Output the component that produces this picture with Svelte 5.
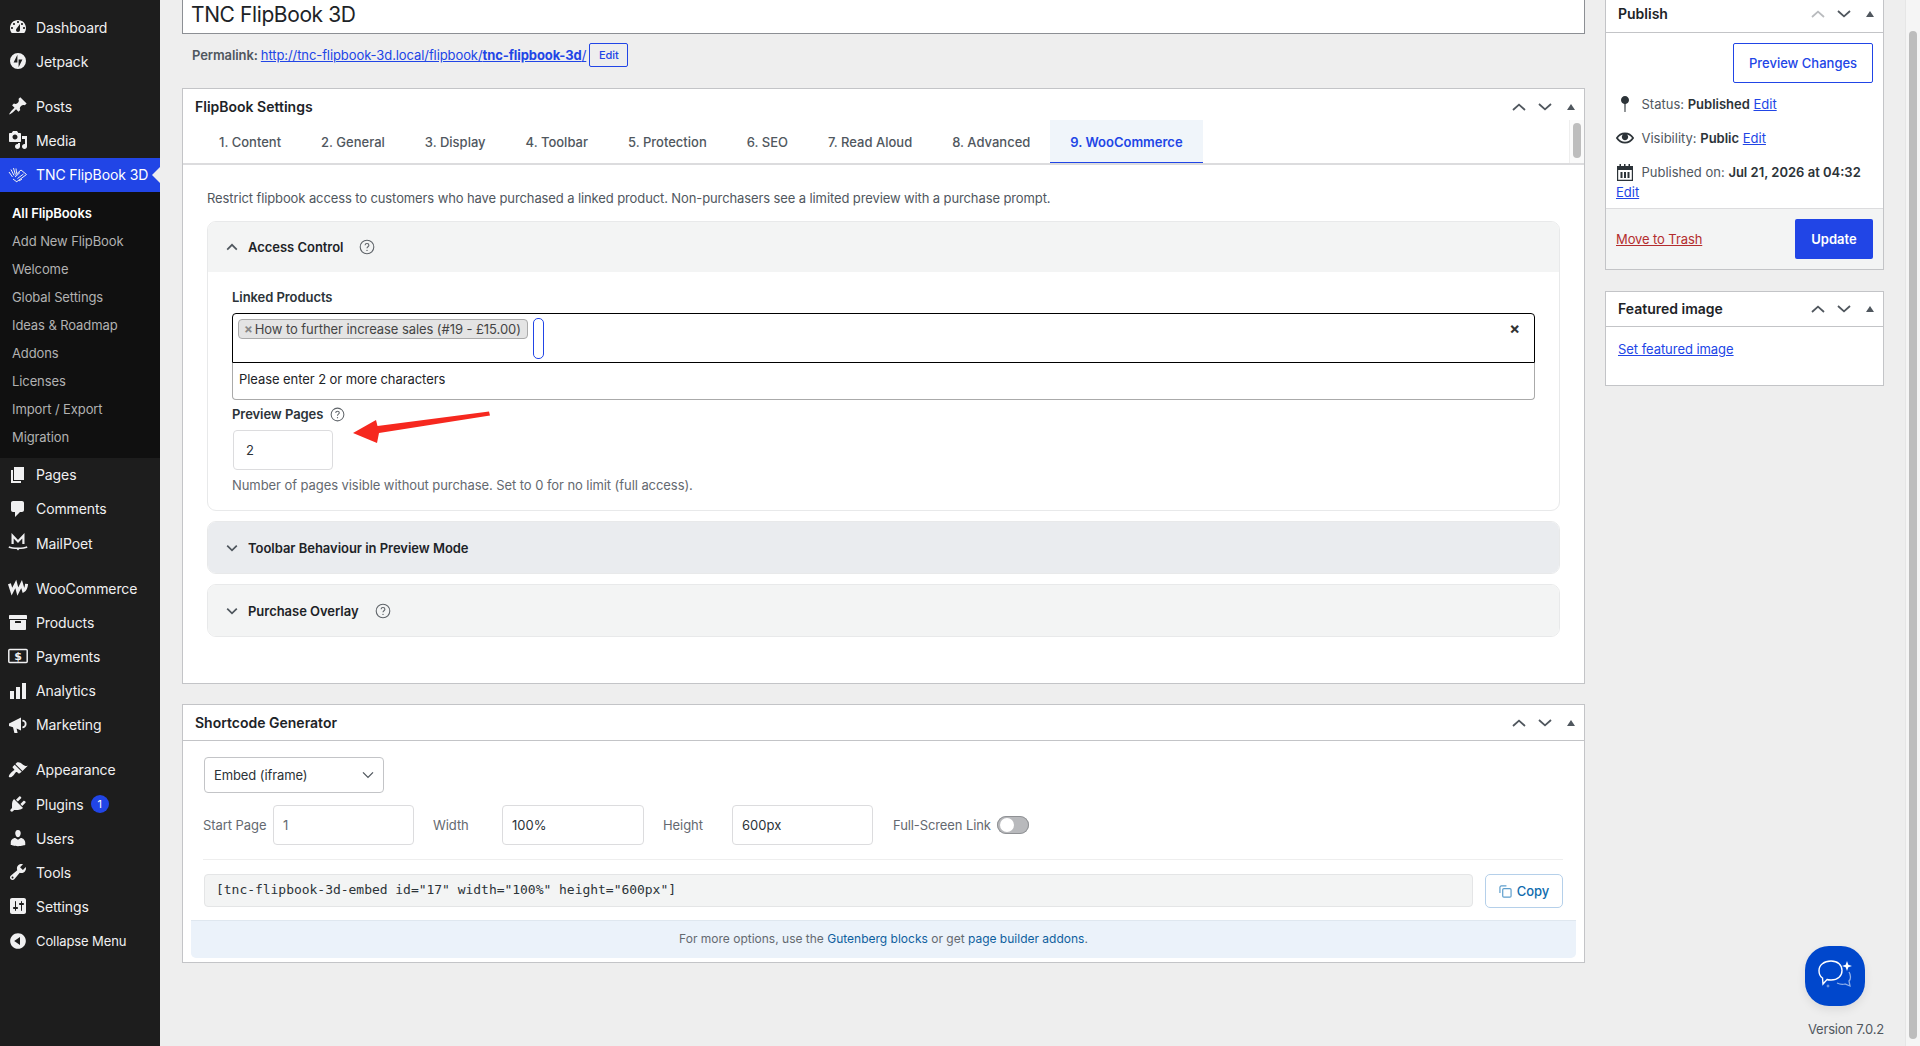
<script>
	const icons = {
		dashboard:
			'M3.76 16h12.48c1.1-1.37 1.76-3.11 1.76-5 0-4.42-3.58-8-8-8s-8 3.58-8 8c0 1.89.66 3.63 1.76 5zM10 4c.55 0 1 .45 1 1s-.45 1-1 1-1-.45-1-1 .45-1 1-1zM6 6c.55 0 1 .45 1 1s-.45 1-1 1-1-.45-1-1 .45-1 1-1zm8 0c.55 0 1 .45 1 1s-.45 1-1 1-1-.45-1-1 .45-1 1-1zm-5.37 5.55L12 7v6c0 1.1-.9 2-2 2s-2-.9-2-2c0-.57.24-1.08.63-1.45zM4 10c.55 0 1 .45 1 1s-.45 1-1 1-1-.45-1-1 .45-1 1-1zm12 0c.55 0 1 .45 1 1s-.45 1-1 1-1-.45-1-1 .45-1 1-1z',
		jetpack: 'M10 2a8 8 0 1 0 0 16a8 8 0 0 0 0-16zM9.4 11.4H5.6l3.8-7.6zM10.6 8.6h3.8l-3.8 7.6z',
		pin: 'M10.44 3.02l1.82-1.82 6.36 6.35-1.83 1.82c-1.05-.68-2.48-.57-3.41.36l-.75.75c-.92.93-1.04 2.35-.35 3.41l-1.83 1.82-2.41-2.41-2.8 2.79c-.42.42-3.38 2.71-3.8 2.29s1.86-3.39 2.28-3.81l2.79-2.79L4.1 9.36l1.83-1.82c1.05.69 2.48.57 3.4-.36l.75-.75c.93-.92 1.05-2.35.36-3.41z',
		media:
			'M13 11V4c0-.55-.45-1-1-1h-1.67L9 1H5L3.67 3H2c-.55 0-1 .45-1 1v7c0 .55.45 1 1 1h10c.55 0 1-.45 1-1zM7 4.5c1.38 0 2.5 1.12 2.5 2.5S8.38 9.5 7 9.5 4.5 8.38 4.5 7 5.62 4.5 7 4.5zM14 6h5v10.5c0 1.38-1.12 2.5-2.5 2.5S14 17.88 14 16.5s1.12-2.5 2.5-2.5c.17 0 .34.02.5.05V9h-3V6zm-4 8.05V13h2v3.5c0 1.38-1.12 2.5-2.5 2.5S7 17.88 7 16.5 8.12 14 9.5 14c.17 0 .34.02.5.05z',
		page: 'M6 15V2h10v13H6zm-1 1h8v2H3V5h2v11z',
		comment: 'M5 2h9c1.1 0 2 .9 2 2v7c0 1.1-.9 2-2 2h-2l-5 5v-5H5c-1.1 0-2-.9-2-2V4c0-1.1.9-2 2-2z',
		products:
			'M19 4v3H1V4c0-.55.45-1 1-1h16c.55 0 1 .45 1 1zM2 8h16v9c0 .55-.45 1-1 1H3c-.55 0-1-.45-1-1V8zm11 3V9.5c0-.28-.22-.5-.5-.5h-5c-.28 0-.5.22-.5.5V11h6z',
		analytics: 'M2 10h4v8H2zM8 6h4v12H8zM14 2h4v16h-4z',
		marketing:
			'M1 8.500L13 2.500v13L8.600 13.400l1 4.600H6.400L5 12.200 1 11zM14.400 4.800a4.200 4.200 0 0 1 0 8.400v-1.800a2.400 2.400 0 0 0 0-4.800z',
		appearance:
			'M14.48 11.06L7.41 3.99l1.5-1.5c.5-.56 2.3-.47 3.51.32 1.21.8 1.43 1.28 2.91 2.1 1.18.64 2.45 1.26 4.45.85zm-.71.71L6.7 4.7 4.93 6.47c-.39.39-.39 1.02 0 1.41l1.06 1.06c.39.39.39 1.03 0 1.42-.6.6-1.43 1.11-2.21 1.69-.35.26-.7.53-1.01.84-1.44 1.44-2.4 3.5-1.69 4.21.71.7 2.77-.25 4.21-1.69.31-.31.58-.66.84-1.01.58-.78 1.09-1.61 1.69-2.21.39-.39 1.03-.39 1.42 0l1.06 1.06c.39.39 1.02.39 1.41 0z',
		plugins:
			'M13.11 4.36L9.87 7.6 8 5.73l3.24-3.24c.35-.34 1.05-.2 1.56.32.52.51.66 1.21.31 1.55zm-8 1.77l.91-1.12 9.01 9.01-1.19.84c-.71.71-2.63 1.16-3.82 1.16H6.14L4.9 17.26c-.59.59-1.54.59-2.12 0-.59-.58-.59-1.53 0-2.12l1.24-1.24v-3.88c0-1.13.4-3.19 1.09-3.89zm7.26 3.97l3.24-3.24c.34-.35 1.04-.21 1.55.31.52.51.66 1.21.31 1.55l-3.24 3.25z',
		users:
			'M10 9.25c-2.27 0-2.73-3.44-2.73-3.44C7 4.02 7.82 2 9.97 2c2.16 0 2.98 2.02 2.71 3.81 0 0-.41 3.44-2.68 3.44zm0 2.57L12.72 10c2.39 0 4.52 2.33 4.52 4.53v2.49s-3.65 1.13-7.24 1.13c-3.65 0-7.24-1.13-7.24-1.13v-2.49c0-2.25 1.94-4.48 4.47-4.48z',
		tools:
			'M16.68 9.77c-1.34 1.34-3.3 1.67-4.95.99l-5.41 6.52c-.99.99-2.59.99-3.58 0s-.99-2.59 0-3.57l6.52-5.42c-.68-1.65-.35-3.61.99-4.95 1.28-1.28 3.12-1.62 4.72-1.06l-2.89 2.89 2.82 2.82 2.86-2.87c.53 1.58.18 3.39-1.08 4.65zM3.81 16.21c.4.39 1.04.39 1.43 0 .4-.4.4-1.04 0-1.43-.39-.4-1.03-.4-1.43 0-.39.39-.39 1.03 0 1.43z',
		settings:
			'M18 16V4c0-1.1-.9-2-2-2H4c-1.1 0-2 .9-2 2v12c0 1.1.9 2 2 2h12c1.1 0 2-.9 2-2zM8 11h1c.55 0 1 .45 1 1s-.45 1-1 1H8v1.5c0 .28-.22.5-.5.5s-.5-.22-.5-.5V13H6c-.55 0-1-.45-1-1s.45-1 1-1h1V5.5c0-.28.22-.5.5-.5s.5.22.5.5V11zm5-2h-1c-.55 0-1-.45-1-1s.45-1 1-1h1V5.5c0-.28.22-.5.5-.5s.5.22.5.5V7h1c.55 0 1 .45 1 1s-.45 1-1 1h-1v5.5c0 .28-.22.5-.5.5s-.5-.22-.5-.5V9z',
		collapse: 'M10 2.16c4.33 0 7.84 3.51 7.84 7.84s-3.51 7.84-7.84 7.84S2.16 14.33 2.16 10 5.71 2.16 10 2.16zm2 11.72V6.12L6.18 9.97z'
	};

	// first block of the admin menu, down to the plugin's own entry
	const topMenu = [
		[
			{ label: 'Dashboard', icon: 'dashboard' },
			{ label: 'Jetpack', icon: 'jetpack' }
		],
		[
			{ label: 'Posts', icon: 'pin' },
			{ label: 'Media', icon: 'media' }
		]
	];

	const subMenu = [
		'All FlipBooks',
		'Add New FlipBook',
		'Welcome',
		'Global Settings',
		'Ideas & Roadmap',
		'Addons',
		'Licenses',
		'Import / Export',
		'Migration'
	];

	const restMenu = [
		[
			{ label: 'Pages', icon: 'page' },
			{ label: 'Comments', icon: 'comment' },
			{ label: 'MailPoet', icon: 'mailpoet' }
		],
		[
			{ label: 'WooCommerce', icon: 'woo' },
			{ label: 'Products', icon: 'products' },
			{ label: 'Payments', icon: 'payments' },
			{ label: 'Analytics', icon: 'analytics' },
			{ label: 'Marketing', icon: 'marketing' }
		],
		[
			{ label: 'Appearance', icon: 'appearance' },
			{ label: 'Plugins', icon: 'plugins', badge: '1' },
			{ label: 'Users', icon: 'users' },
			{ label: 'Tools', icon: 'tools' },
			{ label: 'Settings', icon: 'settings' }
		]
	];

	const tabs = [
		'1. Content',
		'2. General',
		'3. Display',
		'4. Toolbar',
		'5. Protection',
		'6. SEO',
		'7. Read Aloud',
		'8. Advanced',
		'9. WooCommerce'
	];
</script>

{#snippet menuIcon(name)}
	<svg class="menu-icon" viewBox="0 0 20 20" aria-hidden="true">
		{#if name === 'mailpoet'}
			<path class="line" d="M4.600 11V2.800L10 8.400l5.400-5.600V11" stroke-width="2.200" />
			<path class="line" d="M.8 14c2.800 1.300 5.800 1.300 9.200 1.300s6.400 0 9.200-1.300" stroke-width="1.400" />
			<path d="M8.200 15.400h3.600L10 17.400z" />
		{:else if name === 'woo'}
			<path class="line" d="M1.400 5.800l2.500 7.800 3.900-7.600 2 7.600 3.800-7.600 2 6.800c1.500-.8 2.700-3.800 3-7" stroke-width="3" />
		{:else if name === 'payments'}
			<rect class="line" x="0.8" y="3.500" width="18.400" height="13" rx="1" stroke-width="1.500" />
			<text class="dollar" x="10" y="14.200" text-anchor="middle">$</text>
		{:else}
			<path fill-rule="evenodd" d={icons[name]} />
		{/if}
	</svg>
{/snippet}

{#snippet menuGroup(group, last)}
	<ul class="menu-group" class:menu-group--last={last}>
		{#each group as item}
			<li class="menu-item">
				{@render menuIcon(item.icon)}
				<span>{item.label}</span>
				{#if item.badge}
					<span class="badge">{item.badge}</span>
				{/if}
			</li>
		{/each}
	</ul>
{/snippet}

{#snippet handles(upDisabled)}
	<div class="handles">
		<svg class="chev" class:chev--off={upDisabled} viewBox="0 0 14 8"><path d="M1 7l6-5.400L13 7" /></svg>
		<svg class="chev" viewBox="0 0 14 8"><path d="M1 1l6 5.400L13 1" /></svg>
		<span class="tri"></span>
	</div>
{/snippet}

{#snippet help()}
	<svg class="help" viewBox="0 0 16 16" aria-hidden="true">
		<circle cx="8" cy="8" r="6.800" />
		<path d="M6.100 6.300c0-1.100.9-1.800 1.900-1.800s1.900.7 1.900 1.700c0 1.500-1.900 1.500-1.900 3" />
		<circle class="dot" cx="8" cy="11.400" r="0.700" />
	</svg>
{/snippet}

{#snippet caret(up)}
	<svg class="caret" viewBox="0 0 12 8" aria-hidden="true">
		<path d={up ? 'M1.200 6.600L6 1.800l4.800 4.800' : 'M1.200 1.600L6 6.400l4.800-4.800'} />
	</svg>
{/snippet}

<div class="shell">
	<nav class="sidebar">
		{#each topMenu as group, i}
			{@render menuGroup(group, i === topMenu.length - 1)}
		{/each}

		<div class="menu-item menu-item--current">
			<svg class="menu-icon" viewBox="0 0 20 20" aria-hidden="true">
				<g class="line" stroke-width="1">
					<path d="M1 7l3.500 5M3 4.500l3 6M5.500 3l1.800 6.500M8 3.500l.6 5" />
					<path d="M9 16.500l9.500-7L13 5 7.500 10" />
					<path d="M9.500 13.500l6-4.500M7 12l5-4.500M5 14l4 3M11 16l3-2" />
				</g>
			</svg>
			<span>TNC FlipBook 3D</span>
			<span class="current-arrow"></span>
		</div>
		<ul class="submenu">
			{#each subMenu as entry, i}
				<li class:submenu--current={i === 0}>{entry}</li>
			{/each}
		</ul>

		{#each restMenu as group, i}
			{@render menuGroup(group, i === restMenu.length - 1)}
		{/each}

		<div class="menu-item menu-item--collapse">
			{@render menuIcon('collapse')}
			<span>Collapse Menu</span>
		</div>
	</nav>

	<main class="content">
		<div class="col-main">
			<div class="title-box">TNC FlipBook 3D</div>
			<div class="permalink">
				<span class="permalink-label">Permalink:</span>
				<a href="#top">http://tnc-flipbook-3d.local/flipbook/<strong>tnc-flipbook-3d</strong>/</a>
				<span class="btn-edit">Edit</span>
			</div>

			<section class="postbox postbox--settings">
				<header class="settings-head">
					<h2>FlipBook Settings</h2>
					{@render handles(false)}
				</header>
				<div class="tabs">
					{#each tabs as tab, i}
						<span class="tab" class:tab--active={i === tabs.length - 1}>{tab}</span>
					{/each}
					<div class="tabs-scroll"><span></span></div>
				</div>

				<div class="tab-panel">
					<p class="intro">
						Restrict flipbook access to customers who have purchased a linked product. Non-purchasers see a limited preview with a purchase prompt.
					</p>

					<div class="acc">
						<div class="acc-head">
							{@render caret(true)}
							<span>Access Control</span>
							{@render help()}
						</div>
						<div class="acc-body">
							<div class="field-label">Linked Products</div>
							<div class="select2">
								<span class="chip"><span class="chip-x">×</span>How to further increase sales (#19 - £15.00)</span>
								<span class="search"></span>
								<span class="clear">×</span>
							</div>
							<div class="select2-drop">Please enter 2 or more characters</div>
							<div class="field-label field-label--help">Preview Pages {@render help()}</div>
							<div class="input input--preview">2</div>
							<p class="hint">Number of pages visible without purchase. Set to 0 for no limit (full access).</p>
						</div>
					</div>

					<div class="acc acc--closed acc--hover">
						<div class="acc-head">
							{@render caret(false)}
							<span>Toolbar Behaviour in Preview Mode</span>
						</div>
					</div>

					<div class="acc acc--closed acc--last">
						<div class="acc-head">
							{@render caret(false)}
							<span>Purchase Overlay</span>
							{@render help()}
						</div>
					</div>
				</div>
			</section>

			<section class="postbox postbox--shortcode">
				<header class="box-head">
					<h2>Shortcode Generator</h2>
					{@render handles(false)}
				</header>
				<div class="sc-body">
					<div class="sc-select">
						Embed (iframe)
						<svg viewBox="0 0 12 8" aria-hidden="true"><path d="M1 1.400l5 5 5-5" /></svg>
					</div>
					<div class="sc-row">
						<span class="sc-label">Start Page</span>
						<div class="input sc-input sc-input--muted">1</div>
						<span class="sc-label sc-label--w">Width</span>
						<div class="input sc-input sc-input--wide">100%</div>
						<span class="sc-label sc-label--h">Height</span>
						<div class="input sc-input">600px</div>
						<span class="sc-label sc-label--fs">Full-Screen Link</span>
						<span class="toggle"><span></span></span>
					</div>
					<div class="sc-code-row">
						<code>[tnc-flipbook-3d-embed id="17" width="100%" height="600px"]</code>
						<span class="btn-copy">
							<svg viewBox="0 0 14 14" aria-hidden="true">
								<path class="copy-back" d="M1 8.500V2.500A1.500 1.500 0 0 1 2.500 1H8" />
								<rect x="4" y="4" width="9" height="9" rx="1.200" />
							</svg>
							Copy
						</span>
					</div>
				</div>
				<div class="notice">
					For more options, use the <a href="#top">Gutenberg blocks</a> or get <a href="#top">page builder addons</a>.
				</div>
			</section>
		</div>

		<aside class="col-side">
			<section class="postbox postbox--publish">
				<header class="box-head box-head--short">
					<h2>Publish</h2>
					{@render handles(true)}
				</header>
				<div class="publish-body">
					<div class="preview-row"><span class="btn-preview">Preview Changes</span></div>
					<div class="meta">
						<svg viewBox="0 0 20 20" aria-hidden="true"><path d="M14 6c0-2.200-1.800-4-4-4S6 3.800 6 6c0 2.100 1.600 3.800 3.400 4l.1 8h1l.1-8c1.800-.2 3.400-1.900 3.400-4z" /></svg>
						<span>Status: <b>Published</b> <a href="#top">Edit</a></span>
					</div>
					<div class="meta">
						<svg viewBox="-1 -1 22 22" aria-hidden="true"><path d="M19.700 9.400C17.700 6 14 3.900 10 3.900S2.300 6 .3 9.400L0 10l.3.6c2 3.400 5.700 5.500 9.700 5.500s7.700-2.100 9.700-5.500l.3-.6-.3-.6zM10 14.100c-3.100 0-6-1.600-7.700-4.100C3.600 8 5.700 6.600 8 6.100c-.9.6-1.500 1.700-1.500 2.900 0 1.900 1.600 3.500 3.500 3.500s3.500-1.600 3.500-3.500c0-1.200-.6-2.300-1.500-2.900 2.300.5 4.400 1.900 5.700 3.900-1.700 2.500-4.600 4.100-7.700 4.100z" /></svg>
						<span>Visibility: <b>Public</b> <a href="#top">Edit</a></span>
					</div>
					<div class="meta meta--date">
						<svg viewBox="0 0 20 20" aria-hidden="true">
							<path fill-rule="evenodd" d="M2 4h2.500V2h1.500v2h3V2h1.500v2h3V2h1.500v2H18v15H2zM3.200 8v9.800h13.600V8z" />
							<path d="M5.500 10h2v6h-2zM9 10h2v6H9zM12.500 10h2v6h-2z" />
						</svg>
						<span>Published on: <b>Jul 21, 2026 at 04:32</b></span>
					</div>
					<a class="date-edit" href="#top">Edit</a>
				</div>
				<footer class="publish-foot">
					<a href="#top">Move to Trash</a>
					<span class="btn-update">Update</span>
				</footer>
			</section>

			<section class="postbox postbox--featured">
				<header class="box-head box-head--featured">
					<h2>Featured image</h2>
					{@render handles(false)}
				</header>
				<div class="featured-body"><a href="#top">Set featured image</a></div>
			</section>
		</aside>
	</main>

	<!-- annotation drawn over the screenshot -->
	<svg class="arrow" viewBox="0 0 140 34" aria-hidden="true">
		<path d="M1 22L24 9l1.500 6L137 .5l1 4L27 22l-2 10z" />
	</svg>

	<div class="chat">
		<svg viewBox="0 0 60 60" aria-hidden="true">
			<path class="chat-back" d="M44 26c2 3 2 7 0 9l1 5-5-2c-3 1-6 0-8-1" />
			<path class="chat-main" d="M26 15c7 0 11 4 11 9.500S33 34 26 34c-1.500 0-3 0-4-.5L18 38l-.500-6C15 30.500 14 27.500 14 24.500 14 19 19 15 26 15z" />
			<path class="chat-spark" d="M42 15l1.300 3.700L47 20l-3.700 1.300L42 25l-1.300-3.700L37 20l3.700-1.300z" />
			<path class="chat-spark chat-spark--dim" d="M23 38l.600 1.400L25 40l-1.400.600L23 42l-.600-1.400L21 40l1.400-.600z" />
		</svg>
	</div>
	<div class="version">Version 7.0.2</div>

	<div class="page-scroll"><span></span></div>
</div>

<style>
	:global(body) {
		margin: 0;
		background: #eeeeee;
		font-family: Inter, 'Liberation Sans', sans-serif;
		font-size: 13px;
		color: #3c434a;
	}

	a {
		color: #2145e6;
		text-decoration: underline;
	}

	h2 {
		margin: 0;
		font-size: 14px;
		line-height: 20px;
		font-weight: 600;
		color: #1d2327;
	}

	p {
		margin: 0;
	}

	ul {
		list-style: none;
		margin: 0;
		padding: 0;
	}

	.shell {
		position: relative;
		display: grid;
		grid-template-columns: 160px 1fr;
		height: 1046px;
		overflow: hidden;
		background: #eeeeee;
	}

	/* admin menu */
	.sidebar {
		background: #1d1d1d;
		padding-top: 10px;
		color: #f0f0f1;
	}

	.menu-group {
		margin-bottom: 11px;
	}

	.menu-group--last {
		margin-bottom: 0;
	}

	.menu-item {
		display: flex;
		align-items: center;
		height: 34.15px;
		font-size: 14px;
		letter-spacing: -0.1px;
	}

	.menu-icon {
		flex: none;
		width: 20px;
		height: 20px;
		margin: 0 8px 0 8px;
		fill: #f0f0f1;
	}

	.menu-icon .line {
		fill: none;
		stroke: #f0f0f1;
	}

	.dollar {
		font-family: 'DejaVu Sans', sans-serif;
		font-size: 11px;
		font-weight: 700;
		fill: #f0f0f1;
	}

	.menu-item--current {
		position: relative;
		background: #2145e6;
		color: #fff;
	}

	.current-arrow {
		position: absolute;
		right: 0;
		top: 9px;
		border: 8px solid transparent;
		border-right-color: #eeeeee;
		border-left-width: 0;
	}

	.submenu {
		background: #101010;
		padding: 7px 0;
	}

	.submenu li {
		height: 28px;
		line-height: 28px;
		padding-left: 12px;
		font-size: 13px;
		letter-spacing: -0.1px;
		color: #b2b2b2;
	}

	.submenu .submenu--current {
		color: #fff;
		font-weight: 600;
	}

	.badge {
		width: 18px;
		height: 18px;
		margin-left: 7px;
		border-radius: 50%;
		background: #2145e6;
		color: #fff;
		font-size: 11px;
		line-height: 18px;
		text-align: center;
	}

	.menu-item--collapse {
		font-size: 13px;
	}

	/* page columns */
	.content {
		display: flex;
		align-items: flex-start;
		gap: 20px;
		padding-left: 22px;
		min-width: 0;
	}

	.col-main {
		flex: none;
		width: 1403px;
	}

	.col-side {
		flex: none;
		width: 279px;
	}

	.postbox {
		background: #fff;
		border: 1px solid #c3c4c7;
	}

	.title-box {
		box-sizing: border-box;
		height: 34px;
		padding-left: 8px;
		background: #fff;
		border: 1px solid #8c8f94;
		border-top: 0;
		font-size: 21px;
		line-height: 30px;
		color: #1d2327;
		letter-spacing: -0.4px;
	}

	.permalink {
		display: flex;
		align-items: center;
		gap: 3px;
		height: 24px;
		margin: 9px 0 21px;
		padding-left: 10px;
		font-size: 13px;
		letter-spacing: -0.09px;
	}

	.permalink-label {
		font-weight: 600;
		color: #50575e;
	}

	.btn-edit {
		box-sizing: border-box;
		width: 39px;
		height: 24px;
		border: 1px solid #2145e6;
		border-radius: 2px;
		color: #2145e6;
		font-size: 11px;
		font-weight: 500;
		line-height: 22px;
		text-align: center;
	}

	.handles {
		display: flex;
		align-items: center;
		gap: 12px;
	}

	.chev {
		width: 14px;
		height: 8px;
		fill: none;
		stroke: #50575e;
		stroke-width: 1.8;
	}

	.chev--off {
		stroke: #b9bbbe;
	}

	.tri {
		margin-left: 3px;
		border: 4px solid transparent;
		border-top: 0;
		border-bottom: 6px solid #50575e;
	}

	.settings-head,
	.box-head {
		display: flex;
		align-items: center;
		justify-content: space-between;
		padding: 0 9px 0 12px;
	}

	.settings-head {
		height: 26px;
		padding-top: 5px;
	}

	.box-head {
		height: 35px;
		border-bottom: 1px solid #c3c4c7;
	}

	.box-head--short {
		height: 28px;
		padding-bottom: 4px;
	}

	.box-head--featured {
		height: 34px;
	}

	.tabs {
		position: relative;
		display: flex;
		height: 43px;
		padding-left: 16px;
		border-bottom: 2px solid #dcdcde;
	}

	.tab {
		display: flex;
		align-items: center;
		padding: 0 20px;
		font-size: 13px;
		font-weight: 500;
		color: #50575e;
	}

	.tab--active {
		background: #f0f5fa;
		color: #2145e6;
		font-weight: 600;
		box-shadow: inset 0 -1px 0 #2145e6;
	}

	.tabs-scroll {
		position: absolute;
		top: 0;
		right: 0;
		bottom: 0;
		width: 15px;
		background: #fafafa;
		border-left: 1px solid #eeeeee;
		box-sizing: border-box;
	}

	.tabs-scroll span {
		display: block;
		width: 8px;
		height: 35px;
		margin: 3px 0 0 3px;
		border-radius: 4px;
		background: #bdbdbd;
	}

	.tab-panel {
		padding: 23px 24px 0 24px;
	}

	.intro {
		line-height: 20px;
		margin-bottom: 13px;
		color: #50575e;
		letter-spacing: -0.11px;
	}

	.acc {
		border: 1px solid #e8e9ea;
		border-radius: 9px;
		overflow: hidden;
	}

	.acc-head {
		display: flex;
		align-items: center;
		height: 50px;
		padding-left: 18px;
		background: #f3f4f4;
		font-weight: 600;
		color: #1d2327;
		letter-spacing: -0.03px;
	}

	.acc--closed {
		margin-top: 10px;
	}

	.acc--closed .acc-head {
		height: 51px;
	}

	.acc--hover .acc-head {
		background: #eaecef;
	}

	.acc--last {
		margin-bottom: 46px;
	}

	.caret {
		flex: none;
		width: 12px;
		height: 8px;
		margin-right: 10px;
		fill: none;
		stroke: #50575e;
		stroke-width: 1.7;
	}

	.help {
		flex: none;
		width: 16px;
		height: 16px;
		margin-left: 16px;
		fill: none;
		stroke: #5f6469;
		stroke-width: 1.1;
	}

	.help .dot {
		fill: #5f6469;
		stroke: none;
	}

	.acc-body {
		padding: 16px 24px 15px;
	}

	.field-label {
		line-height: 18px;
		margin-bottom: 7px;
		font-weight: 600;
		color: #2c3338;
		letter-spacing: -0.06px;
	}

	.field-label--help {
		display: flex;
		align-items: center;
		height: 18px;
		margin-bottom: 7px;
	}

	.field-label--help .help {
		margin-left: 7px;
		width: 15px;
		height: 15px;
	}

	.select2 {
		box-sizing: border-box;
		position: relative;
		display: flex;
		align-items: flex-start;
		width: 1303px;
		height: 50px;
		padding: 5px 0 0 5px;
		border: 1px solid #000;
		border-radius: 4px 4px 0 0;
	}

	.chip {
		box-sizing: border-box;
		height: 20px;
		padding: 0 6px 0 5px;
		width: 290px;
		white-space: nowrap;
		background: #e4e4e4;
		border: 1px solid #aaaaaa;
		border-radius: 4px;
		line-height: 18px;
		color: #444;
		letter-spacing: -0.07px;
	}

	.chip-x {
		margin-right: 2px;
		color: #888;
		font-weight: 700;
	}

	.search {
		box-sizing: border-box;
		width: 11px;
		height: 41px;
		margin: -1px 0 0 5px;
		border: 1px solid #2145e6;
		border-radius: 5px;
	}

	.clear {
		position: absolute;
		right: 14px;
		top: 5px;
		font-size: 16px;
		line-height: 18px;
		font-weight: 700;
		color: #333;
	}

	.select2-drop {
		box-sizing: border-box;
		width: 1303px;
		height: 37px;
		padding-left: 6px;
		line-height: 32px;
		border: 1px solid #aaaaaa;
		border-top: 0;
		border-radius: 0 0 4px 4px;
		color: #1d2327;
		letter-spacing: -0.07px;
		margin-bottom: 5px;
	}

	.input {
		box-sizing: border-box;
		height: 40px;
		background: #fff;
		border: 1px solid #dcdcde;
		border-radius: 4px;
		line-height: 38px;
		color: #2c3338;
	}

	.input--preview {
		width: 100px;
		margin-left: 1px;
		padding-left: 12px;
	}

	.hint {
		margin-top: 5px;
		line-height: 20px;
		color: #646970;
		letter-spacing: -0.07px;
	}

	/* shortcode generator */
	.postbox--shortcode {
		margin-top: 20px;
		padding-bottom: 4px;
	}

	.sc-body {
		padding: 16px 21px 12px 20px;
	}

	.sc-select {
		box-sizing: border-box;
		display: flex;
		align-items: center;
		justify-content: space-between;
		width: 180px;
		height: 36px;
		margin-left: 1px;
		padding: 0 9px 0 9px;
		border: 1px solid #c3c4c7;
		border-radius: 4px;
		color: #2c3338;
		letter-spacing: -0.1px;
	}

	.sc-select svg {
		width: 12px;
		height: 8px;
		fill: none;
		stroke: #50575e;
		stroke-width: 1.3;
	}

	.sc-row {
		display: flex;
		align-items: center;
		height: 40px;
		margin-top: 12px;
		padding-bottom: 14px;
		border-bottom: 1px solid #eeeeee;
	}

	.sc-label {
		color: #646970;
		letter-spacing: -0.07px;
	}

	.sc-label--w {
		margin-left: 19px;
		width: 69px;
	}

	.sc-label--h {
		margin-left: 19px;
		width: 69px;
	}

	.sc-label--fs {
		margin-left: 20px;
		margin-right: 6px;
		letter-spacing: -0.1px;
	}

	.sc-input {
		width: 141px;
		padding-left: 9px;
	}

	.sc-input--wide {
		width: 142px;
	}

	.sc-label:first-child {
		width: 70px;
	}

	.sc-input--muted {
		color: #646970;
	}

	.toggle {
		box-sizing: border-box;
		width: 32px;
		height: 18px;
		padding: 2px 0 0 3px;
		border-radius: 9px;
		background: #b8b9bc;
		box-shadow: inset 0 0 0 1px #8f9194;
	}

	.toggle span {
		display: block;
		width: 14px;
		height: 14px;
		border-radius: 50%;
		background: #fff;
	}

	.sc-code-row {
		display: flex;
		gap: 12px;
		margin-top: 14px;
		margin-left: 1px;
	}

	code {
		box-sizing: border-box;
		flex: 1;
		height: 33px;
		padding-left: 11px;
		background: #f3f4f4;
		border: 1px solid #e4e5e6;
		border-radius: 4px;
		font-family: 'DejaVu Sans Mono', 'Liberation Mono', monospace;
		font-size: 13px;
		line-height: 29px;
		letter-spacing: -0.03px;
		color: #2c3338;
	}

	.btn-copy {
		box-sizing: border-box;
		display: flex;
		align-items: center;
		justify-content: center;
		gap: 5px;
		width: 78px;
		height: 34px;
		background: #fff;
		border: 1px solid #b5d0ea;
		border-radius: 5px;
		color: #0f6cae;
		font-weight: 500;
	}

	.btn-copy svg {
		width: 13px;
		height: 13px;
		fill: none;
		stroke: #5f9fcd;
		stroke-width: 1.3;
	}

	.notice {
		height: 38px;
		margin: 0 8px 0 8px;
		background: #ebf2fa;
		border-top: 1px solid #dfe7ef;
		border-radius: 0 0 5px 5px;
		box-sizing: border-box;
		line-height: 36px;
		text-align: center;
		font-size: 12px;
		color: #646970;
	}

	.notice a {
		color: #0f5f9e;
		text-decoration: none;
	}

	/* side column */
	.postbox--publish {
		border-top: 0;
	}

	.publish-body {
		padding: 10px 10px 9px 10px;
	}

	.preview-row {
		display: flex;
		justify-content: flex-end;
		margin-bottom: 4px;
	}

	.btn-preview {
		box-sizing: border-box;
		width: 140px;
		height: 40px;
		border: 1px solid #2145e6;
		border-radius: 2px;
		color: #2145e6;
		font-weight: 500;
		line-height: 38px;
		text-align: center;
	}

	.meta {
		display: flex;
		align-items: center;
		height: 34px;
		white-space: nowrap;
		color: #50575e;
	}

	.meta svg {
		flex: none;
		width: 20px;
		height: 20px;
		margin: 0 6.5px 0 -1px;
		fill: #2c3338;
	}

	.meta b {
		font-weight: 600;
		color: #2c3338;
	}

	.date-edit {
		display: block;
		line-height: 20px;
		margin-top: -7px;
		margin-bottom: -3px;
	}

	.publish-foot {
		display: flex;
		align-items: center;
		justify-content: space-between;
		height: 60px;
		padding: 0 10px;
		background: #f3f4f4;
		border-top: 1px solid #dcdcde;
	}

	.publish-foot a {
		color: #b32d2e;
		letter-spacing: -0.1px;
	}

	.btn-update {
		box-sizing: border-box;
		width: 78px;
		height: 40px;
		border-radius: 2px;
		background: #2145e6;
		color: #fff;
		font-weight: 600;
		line-height: 40px;
		text-align: center;
	}

	.postbox--featured {
		margin-top: 21px;
	}

	.featured-body {
		height: 58px;
		padding: 12px 12px 0;
		box-sizing: border-box;
		line-height: 20px;
		letter-spacing: -0.05px;
	}

	/* things that float over the page */
	.arrow {
		position: absolute;
		left: 352px;
		top: 411px;
		width: 140px;
		height: 34px;
		fill: #f6281f;
	}

	.chat {
		position: absolute;
		left: 1805px;
		top: 946px;
		width: 60px;
		height: 60px;
		border-radius: 24px;
		background: #0047cc;
		box-shadow: 0 4px 10px rgba(0, 0, 0, 0.08);
	}

	.chat svg {
		display: block;
		fill: none;
	}

	.chat-main {
		stroke: #fff;
		stroke-width: 1.4;
	}

	.chat-back {
		stroke: #8fb0ea;
		stroke-width: 1.3;
	}

	.chat-spark {
		fill: #fff;
	}

	.chat-spark--dim {
		fill: #8fb0ea;
	}

	.version {
		position: absolute;
		right: 36px;
		top: 1020px;
		line-height: 18px;
		color: #50575e;
		letter-spacing: -0.2px;
	}

	.page-scroll {
		position: absolute;
		right: 0;
		top: 0;
		bottom: 0;
		width: 15px;
		background: #f5f5f5;
		border-left: 1px solid #e6e6e6;
		box-sizing: border-box;
	}

	.page-scroll span {
		display: block;
		width: 8px;
		height: 1008px;
		margin: 31px 0 0 3px;
		border-radius: 4px;
		background: #bdbdbd;
	}
</style>
